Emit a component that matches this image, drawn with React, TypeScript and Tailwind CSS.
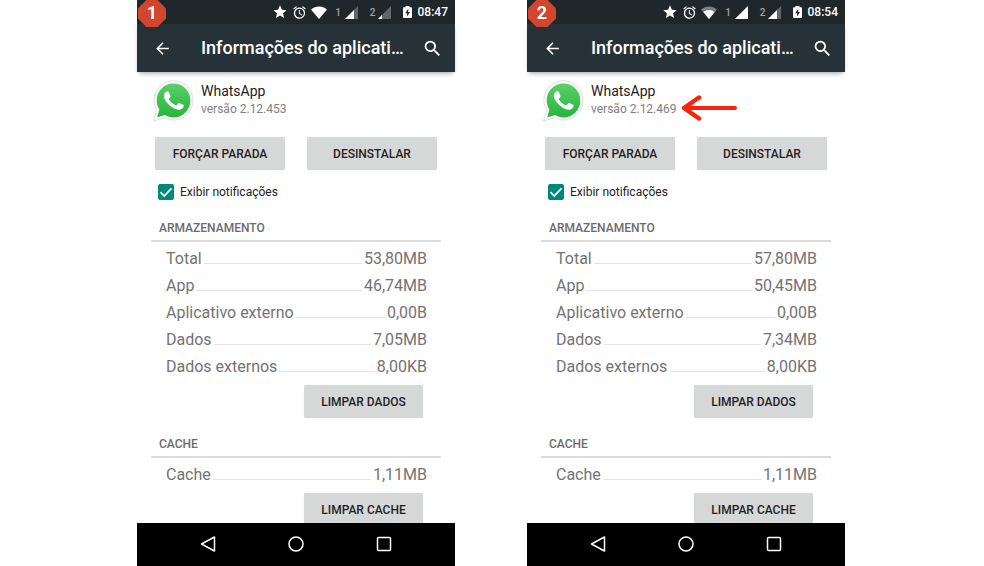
import React, { useState } from 'react';
import { MdAlarm, MdArrowBack, MdSearch, MdStar } from 'react-icons/md';

type Signal = 'low' | 'medium' | 'full';

interface AppInfo {
  step: number;
  time: string;
  version: string;
  wifi: 'full' | 'weak';
  sim1: Signal;
  sim2: Signal;
  storage: [string, string][];
  cache: [string, string][];
  highlight?: boolean;
}

const screens: AppInfo[] = [
  {
    step: 1,
    time: '08:47',
    version: '2.12.453',
    wifi: 'full',
    sim1: 'medium',
    sim2: 'low',
    storage: [
      ['Total', '53,80MB'],
      ['App', '46,74MB'],
      ['Aplicativo externo', '0,00B'],
      ['Dados', '7,05MB'],
      ['Dados externos', '8,00KB'],
    ],
    cache: [['Cache', '1,11MB']],
  },
  {
    step: 2,
    time: '08:54',
    version: '2.12.469',
    wifi: 'weak',
    sim1: 'full',
    sim2: 'medium',
    storage: [
      ['Total', '57,80MB'],
      ['App', '50,45MB'],
      ['Aplicativo externo', '0,00B'],
      ['Dados', '7,34MB'],
      ['Dados externos', '8,00KB'],
    ],
    cache: [['Cache', '1,11MB']],
    highlight: true,
  },
];

const signalPaths: Record<Signal, string> = {
  low: 'M0 13 4 9v4z',
  medium: 'M0 13 9 4v9z',
  full: 'M0 13 13 0v13z',
};

const SignalIcon = ({ level }: { level: Signal }) => (
  <svg viewBox="0 0 13 13" className="size-[13px]" aria-hidden="true">
    <path d="M0 13 13 0v13z" fill="#5f676b" />
    <path d={signalPaths[level]} fill="#fff" />
  </svg>
);

const WifiIcon = ({ strength }: { strength: 'full' | 'weak' }) => (
  <svg viewBox="0 0 16 13" className="ml-1 h-[13px] w-4" aria-hidden="true">
    <path d="M0 3.4C4.6-.6 11.4-.6 16 3.4L8 13z" fill={strength === 'full' ? '#fff' : '#777e81'} />
    {strength === 'weak' && <path d="M2.3 6.1c3.3-2.7 8.1-2.7 11.4 0L8 13z" fill="#fff" />}
  </svg>
);

const BatteryIcon = () => (
  <svg viewBox="0 0 9 12" className="h-3 w-[9px]" aria-hidden="true">
    <path d="M2.500 0h4v1.200h1.700c.5 0 .8.3.8.8v9.200c0 .5-.3.8-.8.8H.8c-.5 0-.8-.3-.8-.8V2c0-.5.3-.8.8-.8h1.700z" fill="#fff" />
    <path d="M5.200 2.800 2.200 7.200h1.900v3.200l2.900-4.500H5.200z" fill="#20272b" />
  </svg>
);

const WhatsAppLogo = () => (
  <svg viewBox="1 0 41 42" className="h-[42px] w-[41px] shrink-0" aria-hidden="true">
    <defs>
      <linearGradient id="bubble" x1="0" y1="0" x2="0" y2="1">
        <stop offset="0" stopColor="#5bd066" />
        <stop offset="1" stopColor="#27b43e" />
      </linearGradient>
    </defs>
    <path
      d="M21.500 .8C10.600 .8 2 9.500 2 20.400c0 3.500.9 6.600 2.500 9.400L1.500 41l11.300-3.200c2.700 1.400 5.600 2.200 8.700 2.200C32.300 40 41 31.300 41 20.400S32.300 .8 21.500 .8z"
      fill="#fbfbfb"
      stroke="#dedede"
      strokeWidth="1"
    />
    <path
      d="M21.500 3.500C12.200 3.500 4.700 11 4.700 20.400c0 3.300 1 6.400 2.700 9L5.200 37.300l8-2.200c2.500 1.500 5.200 2.300 8.300 2.300 9.300 0 16.900-7.600 16.900-17S30.800 3.500 21.500 3.500z"
      fill="url(#bubble)"
    />
    <path
      transform="translate(2 .9) scale(1.640)"
      d="M17.472 14.382c-.297-.149-1.758-.867-2.030-.967-.273-.099-.471-.148-.670.150-.197.297-.767.966-.940 1.164-.173.199-.347.223-.644.075-.297-.150-1.255-.463-2.390-1.475-.883-.788-1.480-1.761-1.653-2.059-.173-.297-.018-.458.130-.606.134-.133.298-.347.446-.520.149-.174.198-.298.298-.497.099-.198.050-.371-.025-.520-.075-.149-.669-1.612-.916-2.207-.242-.579-.487-.500-.669-.510-.173-.008-.371-.010-.570-.010-.198 0-.520.074-.792.372-.272.297-1.040 1.016-1.040 2.479 0 1.462 1.065 2.875 1.213 3.074.149.198 2.096 3.200 5.077 4.487.709.306 1.262.489 1.694.625.712.227 1.360.195 1.871.118.571-.085 1.758-.719 2.006-1.413.248-.694.248-1.289.173-1.413-.074-.124-.272-.198-.570-.347z"
      fill="#fff"
    />
  </svg>
);

const RedArrow = () => (
  <svg
    viewBox="0 0 56 26"
    className="absolute bottom-[-3px] left-full ml-1 h-[26px] w-14"
    fill="none"
    stroke="#f9240c"
    strokeLinecap="round"
    strokeLinejoin="round"
    aria-hidden="true"
  >
    <path d="M4 13h50" strokeWidth="4" />
    <path d="M18 2.500 3 13l15 10.500" strokeWidth="4.500" />
  </svg>
);

const GrayButton = ({ className = '', children }: { className?: string; children: React.ReactNode }) => (
  <button
    type="button"
    className={`h-[33px] rounded-xs bg-[#d6d8d7] text-xs font-medium text-[#1f1f1f] shadow-[0_0_1px_#c4c6c5] ${className}`}
  >
    {children}
  </button>
);

const SectionTitle = ({ children }: { children: React.ReactNode }) => (
  <h2 className="mx-3.5 mt-[18px] border-b-2 border-[#dcdcdc] px-2 pb-1 text-xs leading-4 font-medium text-[#6b6b6b]">
    {children}
  </h2>
);

const SizeTable = ({ rows }: { rows: [string, string][] }) => (
  <div className="pt-[3px] pr-7 pb-px pl-[29px]">
    <table className="block text-base text-[#737373]">
      <tbody className="block">
        {rows.map(([label, value]) => (
          <tr key={label} className="flex h-[27px] items-center gap-0.5">
            <th scope="row" className="flex flex-1 items-baseline gap-0.5 p-0 text-left font-normal whitespace-nowrap">
              {label}
              <span className="flex-1 border-b border-[#e2e2e2]" />
            </th>
            <td className="p-0 text-right whitespace-nowrap">{value}</td>
          </tr>
        ))}
      </tbody>
    </table>
  </div>
);

const Phone = ({ info }: { info: AppInfo }) => {
  const [notify, setNotify] = useState(true);

  return (
    <section className="relative flex w-full max-w-[318px] flex-col bg-white">
      <span className="absolute top-0 left-px z-20 flex size-7 items-center justify-center bg-[#d2452f] pb-0.5 text-lg leading-none font-bold text-white [clip-path:polygon(30%_0,70%_0,100%_30%,100%_66%,70%_96%,30%_96%,0_66%,0_30%)]">
        {info.step}
      </span>

      <div className="flex h-6 items-center justify-end bg-[#20272b] pr-[7px] text-white">
        <MdStar size={16} />
        <MdAlarm size={15} className="ml-1" />
        <WifiIcon strength={info.wifi} />
        <span className="mr-1 ml-2 text-[10px] font-medium text-[#a0a5a7]">1</span>
        <SignalIcon level={info.sim1} />
        <span className="mr-0.5 ml-3 text-[10px] font-medium text-[#a0a5a7]">2</span>
        <SignalIcon level={info.sim2} />
        <span className="mr-1.5 ml-3">
          <BatteryIcon />
        </span>
        <span className="text-xs font-medium">{info.time}</span>
      </div>

      <header className="z-10 flex h-12 items-center bg-[#263238] pr-3 pl-4 text-white shadow-[0_3px_5px_-2px_rgba(0,0,0,0.4)]">
        <button type="button" aria-label="Voltar">
          <MdArrowBack size={19} />
        </button>
        <h1 className="ml-[29px] flex-1 text-lg font-medium whitespace-nowrap">Informações do aplicati…</h1>
        <button type="button" aria-label="Pesquisar">
          <MdSearch size={21} />
        </button>
      </header>

      <main className="min-h-0 flex-1 overflow-hidden">
        <div className="flex gap-[7px] px-4 pt-2">
          <WhatsAppLogo />
          <div className="pt-0.5">
            <p className="text-sm leading-[18px] text-[#222]">WhatsApp</p>
            <p className="relative text-xs leading-[18px] text-[#808080]">
              versão {info.version}
              {info.highlight && <RedArrow />}
            </p>
          </div>
        </div>

        <div className="mt-[15px] grid grid-cols-2 gap-[22px] px-[18px]">
          <GrayButton>FORÇAR PARADA</GrayButton>
          <GrayButton>DESINSTALAR</GrayButton>
        </div>

        <label className="mt-3 ml-[21px] flex h-5 w-fit items-center gap-1.5 text-xs text-[#222]">
          <span className="relative flex size-4">
            <input
              type="checkbox"
              checked={notify}
              onChange={(e) => setNotify(e.target.checked)}
              className="size-4 appearance-none rounded-xs border-2 border-[#00897b] checked:bg-[#00897b]"
            />
            {notify && (
              <svg viewBox="0 0 16 16" className="pointer-events-none absolute inset-0" fill="none" aria-hidden="true">
                <path d="M2.500 8.200 6.200 12l7.300-7.600" stroke="#fff" strokeWidth="1.700" />
              </svg>
            )}
          </span>
          Exibir notificações
        </label>

        <SectionTitle>ARMAZENAMENTO</SectionTitle>
        <SizeTable rows={info.storage} />
        <div className="flex justify-end pt-1 pr-8">
          <GrayButton className="w-[119px]">LIMPAR DADOS</GrayButton>
        </div>

        <SectionTitle>CACHE</SectionTitle>
        <SizeTable rows={info.cache} />
        <div className="flex justify-end pt-1 pr-8">
          <GrayButton className="w-[119px]">LIMPAR CACHE</GrayButton>
        </div>
      </main>

      <nav className="flex h-[43px] shrink-0 items-center justify-center gap-[72px] bg-black pb-px">
        <button type="button" aria-label="Voltar">
          <svg viewBox="0 0 16 16" className="size-4" fill="none" stroke="#fff" strokeWidth="1.500" strokeLinejoin="round">
            <path d="M14.500 1v14L1.500 8z" />
          </svg>
        </button>
        <button type="button" aria-label="Início">
          <svg viewBox="0 0 16 16" className="size-4" fill="none" stroke="#fff" strokeWidth="1.500">
            <circle cx="8" cy="8" r="7" />
          </svg>
        </button>
        <button type="button" aria-label="Recentes">
          <svg viewBox="0 0 16 16" className="size-4" fill="none" stroke="#fff" strokeWidth="1.500">
            <rect x="1.500" y="1.500" width="13" height="13" rx="1" />
          </svg>
        </button>
      </nav>
    </section>
  );
};

const App = () => {
  return (
    <div className="flex h-screen justify-center gap-[72px] overflow-hidden bg-white pr-0.5 font-[Roboto,sans-serif]">
      {screens.map((info) => (
        <Phone key={info.step} info={info} />
      ))}
    </div>
  );
};

export default App;
